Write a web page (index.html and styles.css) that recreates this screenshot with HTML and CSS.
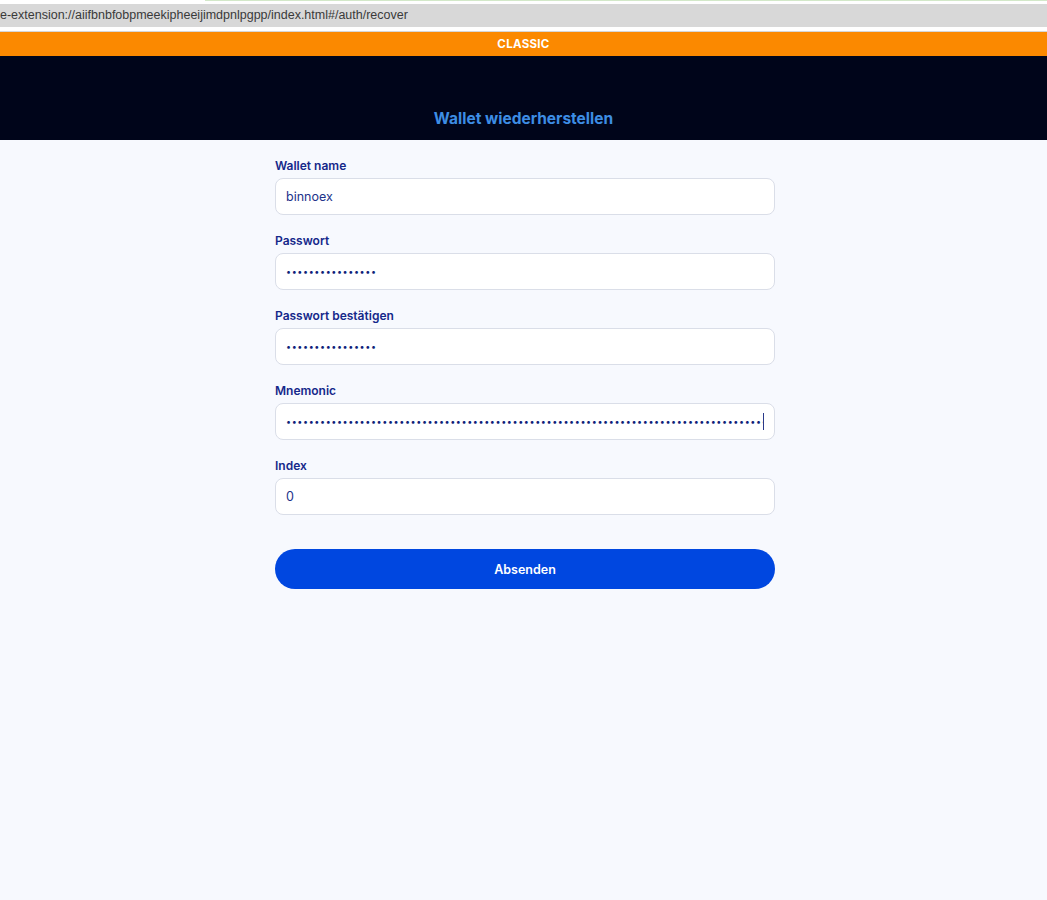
FILE: index.html
```html
<!DOCTYPE html>
<html lang="de">
<head>
<meta charset="utf-8">
<title>Wallet wiederherstellen</title>
<link rel="stylesheet" href="styles.css">
</head>
<body>
<div class="chrome">
  <div class="chrome-top"><span class="chrome-top-left"></span><span class="chrome-top-right"></span></div>
  <div class="urlbar">e-extension://aiifbnbfobpmeekipheeijimdpnlpgpp/index.html#/auth/recover</div>
  <div class="chrome-gap"></div>
</div>
<div class="network">CLASSIC</div>
<header class="header">
  <h1 class="title">Wallet wiederherstellen</h1>
</header>
<main class="page">
  <form class="form" onsubmit="return false">
    <div class="field">
      <label class="label" for="name">Wallet name</label>
      <input class="input" id="name" type="text" value="binnoex">
    </div>
    <div class="field">
      <label class="label" for="pw">Passwort</label>
      <input class="input" id="pw" type="password" value="aaaaaaaaaaaaaaaa">
    </div>
    <div class="field">
      <label class="label" for="pw2">Passwort bestätigen</label>
      <input class="input" id="pw2" type="password" value="aaaaaaaaaaaaaaaa">
    </div>
    <div class="field">
      <label class="label" for="mn">Mnemonic</label>
      <div class="input-wrap">
        <input class="input" id="mn" type="password" value="aaaaaaaaaaaaaaaaaaaaaaaaaaaaaaaaaaaaaaaaaaaaaaaaaaaaaaaaaaaaaaaaaaaaaaaaaaaaaaaaaaaaaaaaaaaaaaaaaaaaaa">
        <span class="caret"></span>
      </div>
    </div>
    <div class="field field-last">
      <label class="label" for="idx">Index</label>
      <input class="input" id="idx" type="text" value="0">
    </div>
    <button class="submit" type="submit">Absenden</button>
  </form>
</main>
</body>
</html>
```

FILE: styles.css
```css
html, body {
  margin: 0;
  padding: 0;
}
body {
  background: #f7f9fe;
  font-family: "Inter", "Lato", "Noto Sans", sans-serif;
  min-height: 900px;
}
.chrome {
  background: #ffffff;
}
.chrome-top {
  display: flex;
  height: 1px;
}
.chrome-top-left {
  width: 205px;
  background: #ffffff;
}
.chrome-top-right {
  flex: 1;
  background: #d3e8c9;
}
.urlbar {
  margin-top: 3px;
  height: 23px;
  line-height: 23px;
  background: #d8d8d8;
  color: #3a3a3a;
  font-family: "Liberation Sans", Arial, sans-serif;
  font-size: 12.5px;
  white-space: nowrap;
  overflow: hidden;
}
.chrome-gap {
  height: 4px;
  background: #ffffff;
  border-bottom: 1px solid #d6d6d6;
}
.network {
  height: 24px;
  line-height: 24px;
  background: #fb8900;
  color: #ffffff;
  text-align: center;
  font-size: 11.5px;
  font-weight: 700;
  letter-spacing: 0.3px;
}
.header {
  height: 84px;
  background: #00051a;
  display: flex;
  align-items: flex-end;
  justify-content: center;
}
.title {
  margin: 0 0 11px 0;
  color: #3d8de4;
  font-size: 15.5px;
  font-weight: 700;
  line-height: 20px;
}
.page {
  padding-top: 18px;
}
.form {
  width: 500px;
  margin: 0 auto;
  padding-left: 3px;
  display: flex;
  flex-direction: column;
}
.field {
  display: flex;
  flex-direction: column;
  margin-bottom: 18px;
}
.field-last {
  margin-bottom: 34px;
}
.label {
  color: #15288a;
  font-size: 12px;
  font-weight: 600;
  line-height: 16px;
  margin-bottom: 4px;
}
.input-wrap {
  position: relative;
  display: flex;
}
.input {
  box-sizing: border-box;
  width: 100%;
  height: 37px;
  border: 1px solid #dadee8;
  border-radius: 8px;
  background: #ffffff;
  padding: 0 10px;
  color: #22338a;
  font-family: "Inter", "Lato", "Noto Sans", sans-serif;
  font-size: 12.5px;
  outline: none;
}
input[type="password"] {
  font-size: 9px;
  letter-spacing: 0.6px;
  color: #0f1f7a;
}
.caret {
  position: absolute;
  right: 11px;
  top: 10px;
  width: 1px;
  height: 17px;
  background: #2a3a8a;
}
.submit {
  height: 40px;
  border: none;
  border-radius: 20px;
  background: #0047e0;
  color: #ffffff;
  font-family: "Inter", "Lato", "Noto Sans", sans-serif;
  font-size: 12.5px;
  font-weight: 600;
  cursor: pointer;
}
```
